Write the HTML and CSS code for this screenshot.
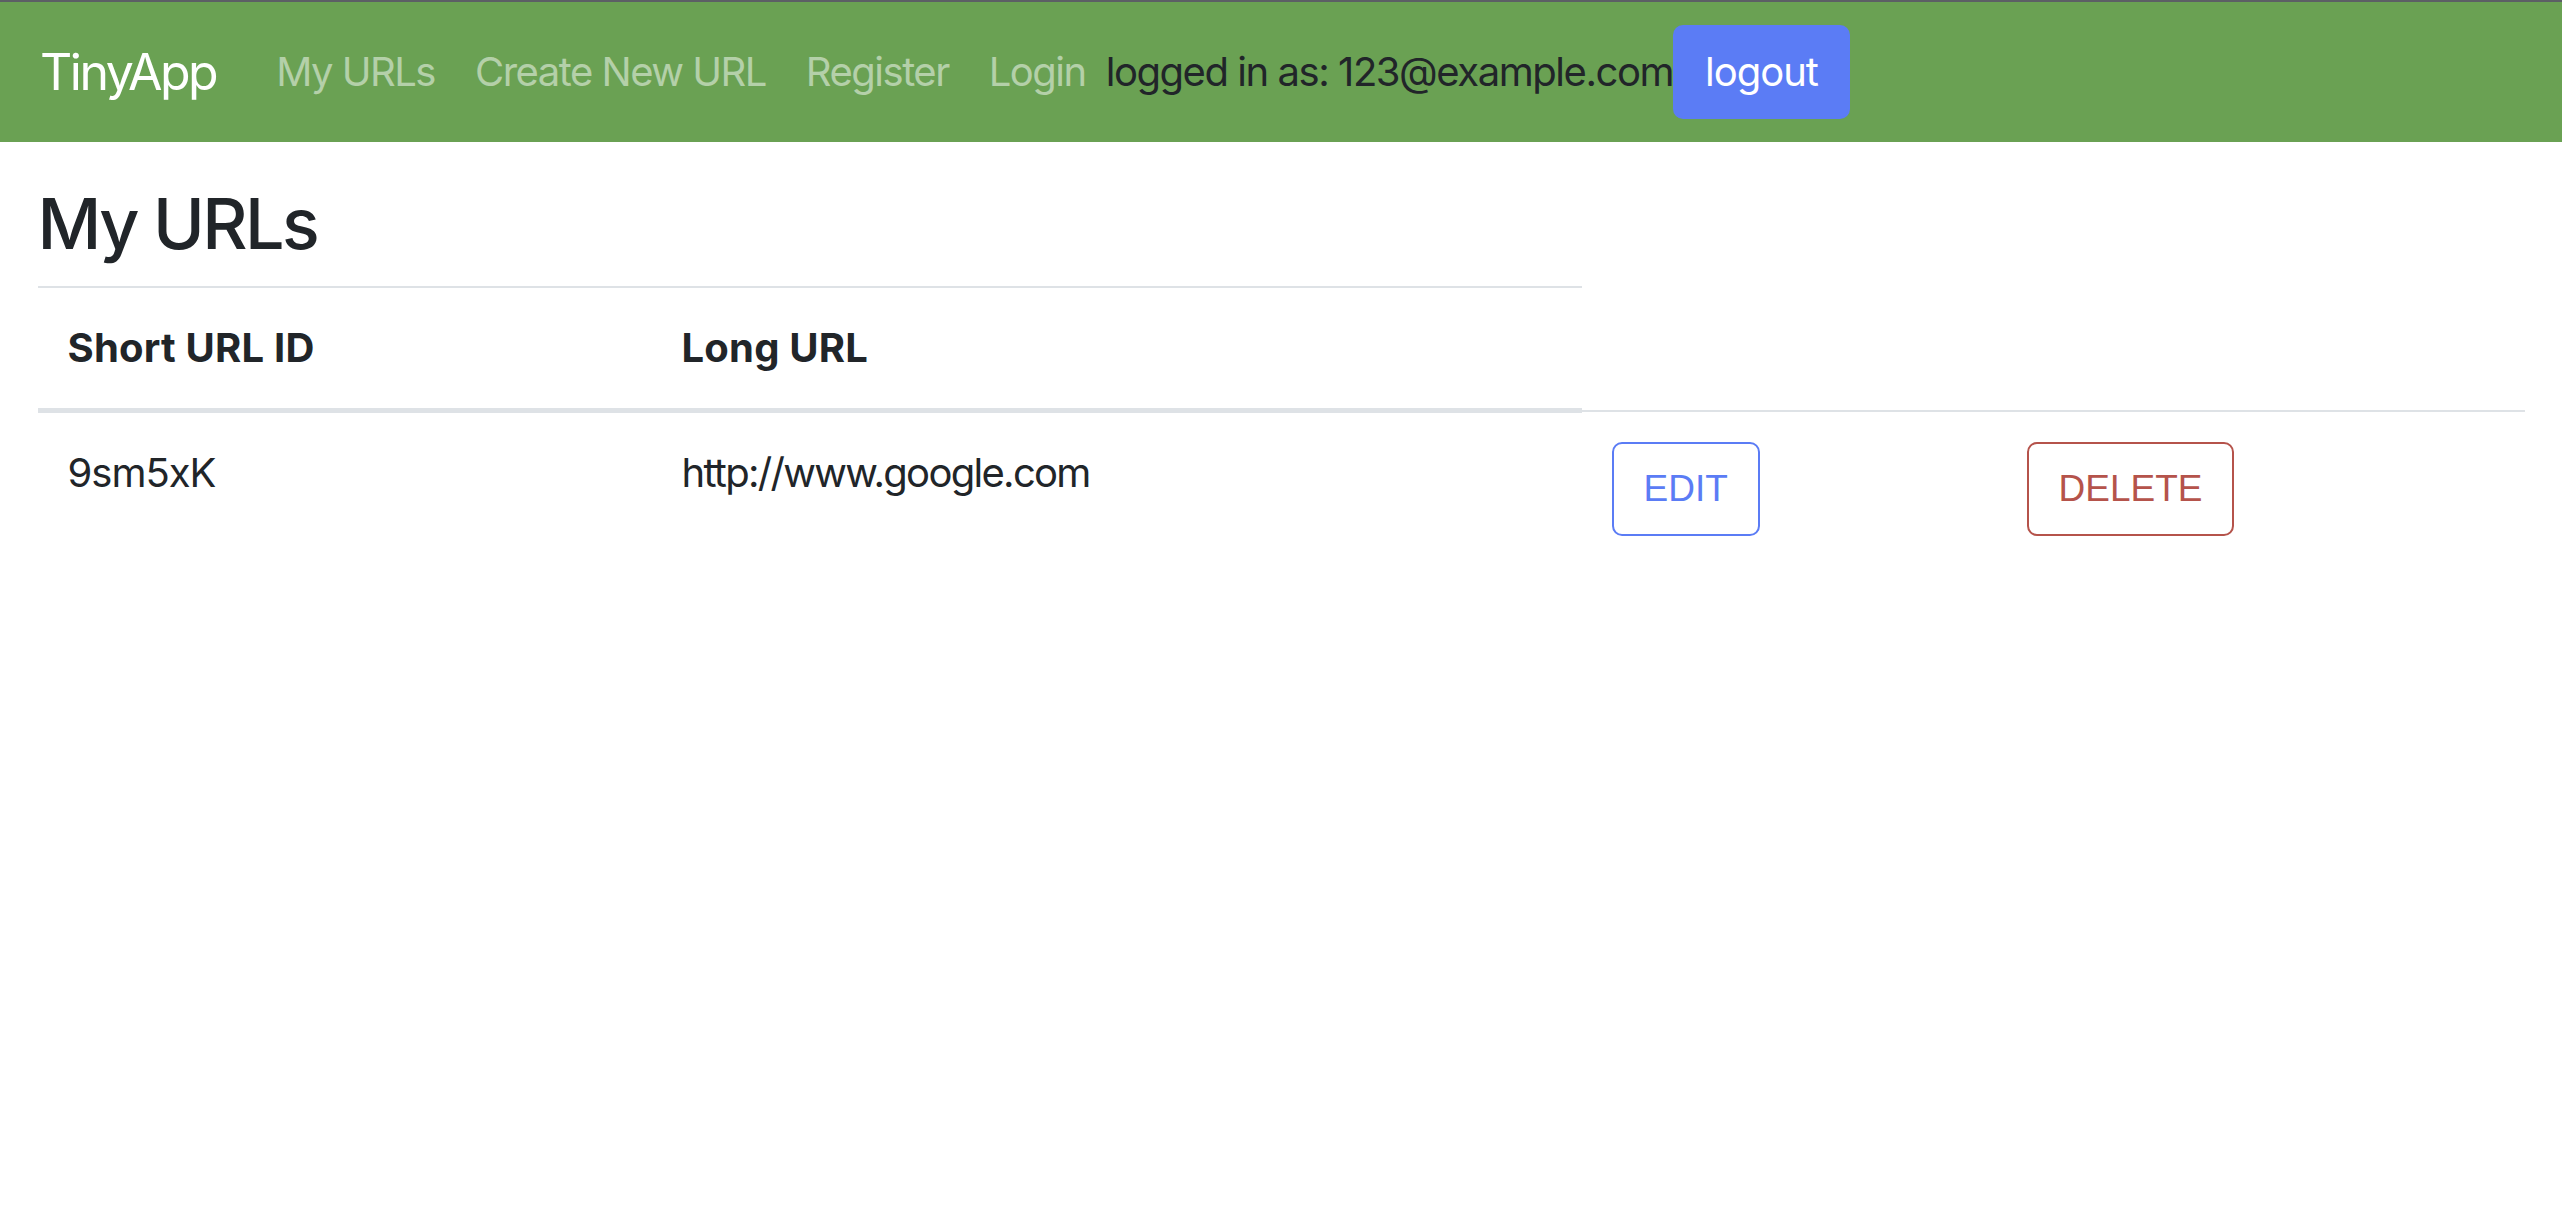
FILE: index.html
```html
<!DOCTYPE html>
<html lang="en">
<head>
<meta charset="utf-8">
<title>TinyApp</title>
<link rel="stylesheet" href="styles.css">
</head>
<body>
<div class="frame-top"></div>
<nav class="navbar">
  <a class="brand" href="#">TinyApp</a>
  <ul class="nav">
    <li><a class="nav-link" href="#">My URLs</a></li>
    <li><a class="nav-link" href="#">Create New URL</a></li>
    <li><a class="nav-link" href="#">Register</a></li>
    <li><a class="nav-link" href="#">Login</a></li>
  </ul>
  <span class="user">logged in as: 123@example.com</span>
  <button class="btn btn-logout" type="button">logout</button>
</nav>
<main class="content">
  <h3 class="title">My URLs</h3>
  <table class="urls">
    <colgroup>
      <col class="c1"><col class="c2"><col class="c3"><col class="c4">
    </colgroup>
    <thead>
      <tr>
        <th>Short URL ID</th>
        <th>Long URL</th>
      </tr>
    </thead>
    <tbody>
      <tr>
        <td class="short-id">9sm5xK</td>
        <td class="long-url">http://www.google.com</td>
        <td><button class="btn-outline btn-edit" type="button">EDIT</button></td>
        <td><button class="btn-outline btn-delete" type="button">DELETE</button></td>
      </tr>
    </tbody>
  </table>
</main>
</body>
</html>
```

FILE: styles.css
```css
* { box-sizing: border-box; }

html, body {
  margin: 0;
  padding: 0;
  background: #ffffff;
}

body {
  font-family: Inter, "Noto Sans", "Liberation Sans", sans-serif;
  font-size: 40px;
  line-height: 60px;
  color: #212529;
}

.frame-top {
  height: 2px;
  background: #5c5f65;
}

.navbar {
  display: flex;
  align-items: center;
  padding: 20px 40px;
  background: #6aa153;
}

.brand {
  font-size: 50px;
  line-height: 75px;
  padding: 12.5px 0;
  margin-right: 40px;
  color: #ffffff;
  text-decoration: none;
  letter-spacing: -2.5px;
}

.nav {
  display: flex;
  list-style: none;
  margin: 0;
  padding: 0;
}

.nav-link {
  display: block;
  padding: 20px 20px;
  color: rgba(255, 255, 255, 0.5);
  text-decoration: none;
  letter-spacing: -1.5px;
}

.user {
  color: #212529;
  letter-spacing: -1.45px;
}

.btn {
  font-family: inherit;
  font-size: 40px;
  line-height: 60px;
  padding: 15px 30px;
  border: 2.5px solid transparent;
  border-radius: 10px;
  cursor: pointer;
}

.btn-logout {
  background: #5b7cf5;
  border-color: #5b7cf5;
  color: #ffffff;
  letter-spacing: -1px;
}

.content {
  padding: 40px 37.5px 0;
}

.title {
  margin: 0 0 20px;
  font-size: 70px;
  line-height: 84px;
  font-weight: 500;
  letter-spacing: -2.6px;
}

.urls {
  width: 100%;
  border-collapse: collapse;
  table-layout: fixed;
}

.c1 { width: 614px; }
.c2 { width: 930px; }
.c3 { width: 415px; }
.c4 { width: auto; }

.urls th,
.urls td {
  padding: 30px;
  text-align: left;
  vertical-align: top;
  border-top: 2.5px solid #dee2e6;
}

.urls thead th {
  vertical-align: bottom;
  border-bottom: 5px solid #dee2e6;
  font-weight: 700;
  letter-spacing: 0.2px;
}

.short-id { letter-spacing: -1px; }
.long-url { letter-spacing: -1.7px; }

.btn-outline {
  font-family: "Liberation Sans", Arial, sans-serif;
  font-size: 37px;
  line-height: 60px;
  padding: 15px 30px;
  background: #ffffff;
  border: 2.5px solid;
  border-radius: 10px;
  cursor: pointer;
}

.btn-edit {
  color: #5b7cf5;
  border-color: #5b7cf5;
}

.btn-delete {
  color: #b5534b;
  border-color: #b5534b;
}
```
